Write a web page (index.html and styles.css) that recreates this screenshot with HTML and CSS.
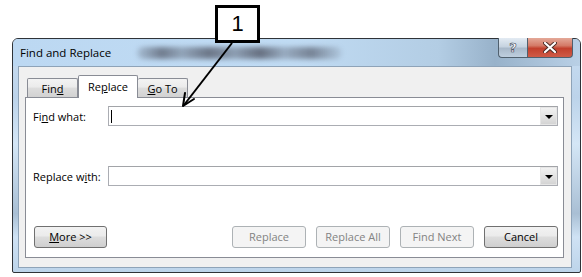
FILE: index.html
```html
<!DOCTYPE html>
<html lang="en">
  <head>
    <meta charset="UTF-8" />
    <title>Find and Replace</title>
    <link rel="stylesheet" href="styles.css">
  </head>
  <body>
    <div class="dialog">
      <div class="titlebar">
        <span class="title">Find and Replace</span>
        <span class="title-glow"></span>
        <div class="caption-btns">
          <span class="cap help">?</span>
          <span class="cap close">
            <svg width="14" height="11" viewBox="0 0 14 11">
              <path d="M2 1 L12 10 M12 1 L2 10" stroke="#4a2a24" stroke-width="4" stroke-linecap="round" />
              <path d="M2 1 L12 10 M12 1 L2 10" stroke="#fff" stroke-width="2.2" stroke-linecap="round" />
            </svg>
          </span>
        </div>
      </div>
      <div class="client">
        <div class="tabs">
          <span class="tab">Fin<u>d</u></span>
          <span class="tab active">Re<u>p</u>lace</span>
          <span class="tab"><u>G</u>o To</span>
        </div>
        <div class="panel">
          <div class="row">
            <label>Fi<u>n</u>d what:</label>
            <div class="combo">
              <span class="caret"></span>
              <span class="drop"></span>
            </div>
          </div>
          <div class="row">
            <label>Replace w<u>i</u>th:</label>
            <div class="combo">
              <span class="drop"></span>
            </div>
          </div>
          <div class="buttons">
            <button class="btn more"><u>M</u>ore &gt;&gt;</button>
            <button class="btn" disabled>Replace</button>
            <button class="btn" disabled>Replace All</button>
            <button class="btn" disabled>Find Next</button>
            <button class="btn">Cancel</button>
          </div>
        </div>
      </div>
    </div>

    <!-- annotation over the screenshot -->
    <div class="callout">1</div>
    <svg class="pointer" width="582" height="277" viewBox="0 0 582 277">
      <line x1="232" y1="43" x2="184" y2="105" stroke="#000" stroke-width="2" />
      <path d="M183 106 L185 93 M183 106 L194 99" stroke="#000" stroke-width="2" fill="none" stroke-linecap="round" />
    </svg>
  </body>
</html>
```

FILE: styles.css
```css
body {
  margin: 0;
  padding: 38px 0 0 12px;
  background: #fff;
  font-family: "Open Sans", "Noto Sans", sans-serif;
  font-size: 11px;
  color: #000;
  width: 582px;
  height: 277px;
  box-sizing: border-box;
  overflow: hidden;
}

.dialog {
  width: 569px;
  height: 235px;
  box-sizing: border-box;
  border: 1px solid #2f3338;
  border-radius: 6px 6px 2px 2px;
  background: linear-gradient(180deg, #c9def2 0%, #bcd3ea 25%, #d4e6f6 45%, #a9bfd4 75%, #cfe2f4 85%, #bdd4ea 100%);
  display: flex;
  flex-direction: column;
}

.titlebar {
  height: 27px;
  display: flex;
  align-items: flex-start;
  background: linear-gradient(90deg, #bcd8f2 0%, #c0dbf3 50%, #b3cde4 75%, #98b2ca 85%, #b9d0e6 100%);
  border-radius: 5px 5px 0 0;
}

.title {
  margin: 6px 0 0 7px;
  font-size: 11.5px;
  white-space: nowrap;
}

.title-glow {
  width: 205px;
  height: 12px;
  margin: 8px 0 0 26px;
  background: linear-gradient(90deg, rgba(80, 85, 100, 0.2) 0%, rgba(80, 85, 100, 0.7) 12%, rgba(80, 85, 100, 0.4) 22%, rgba(80, 85, 100, 0.75) 35%, rgba(80, 85, 100, 0.45) 48%, rgba(80, 85, 100, 0.8) 60%, rgba(80, 85, 100, 0.35) 72%, rgba(80, 85, 100, 0.65) 85%, rgba(80, 85, 100, 0.1) 100%);
  border-radius: 6px;
  filter: blur(2.5px);
}

.caption-btns {
  margin: -1px 7px 0 auto;
  display: flex;
  height: 20px;
}

.cap {
  display: flex;
  align-items: center;
  justify-content: center;
  box-sizing: border-box;
  border: 1px solid #50606e;
  border-top: none;
}

.help {
  width: 29px;
  border-radius: 0 0 0 4px;
  border-right: none;
  background: linear-gradient(180deg, #e3ebf3 0%, #c6d3e0 45%, #a9b9ca 55%, #bfcfdf 100%);
  color: #fff;
  font-family: "DejaVu Sans", sans-serif;
  font-weight: bold;
  font-size: 13px;
  -webkit-text-stroke: 0.6px #3a4656;
}

.close {
  width: 46px;
  border-radius: 0 0 4px 0;
  background: linear-gradient(180deg, #e4a999 0%, #d47a67 40%, #c2402d 55%, #cf5b47 100%);
}

.client {
  margin: 0 8px 0 5px;
  height: 202px;
  box-sizing: border-box;
  border: 1px solid #8ea3b8;
  background: #f0f0f0;
  padding: 8px 7px 9px 6px;
  display: flex;
  flex-direction: column;
}

.tabs {
  display: flex;
  align-items: flex-end;
  height: 22px;
  padding-left: 2px;
  position: relative;
  z-index: 1;
}

.tab {
  box-sizing: border-box;
  height: 19px;
  border: 1px solid #898c95;
  border-bottom: none;
  border-radius: 2px 2px 0 0;
  background: linear-gradient(180deg, #f3f3f3 0%, #ebebeb 45%, #dddddd 50%, #d2d2d2 100%);
  display: flex;
  justify-content: center;
  padding-top: 2px;
}

.tab:first-child {
  width: 51px;
}

.tab:last-child {
  width: 50px;
  border-left: none;
}

.tab.active {
  width: 60px;
  height: 23px;
  margin-bottom: -1px;
  background: #fff;
  padding-top: 3px;
}

.panel {
  height: 161px;
  box-sizing: border-box;
  border: 1px solid #898c95;
  background: #fff;
  padding: 8px 5px 9px 7px;
  display: flex;
  flex-direction: column;
  gap: 40px;
}

.row {
  display: flex;
  align-items: center;
  height: 20px;
}

.row label {
  width: 75px;
}

.combo {
  width: 450px;
  height: 20px;
  box-sizing: border-box;
  border: 1px solid #abadb3;
  border-top-color: #a2a4a8;
  display: flex;
  align-items: center;
  justify-content: space-between;
}

.caret {
  width: 1px;
  height: 13px;
  margin-left: 2px;
  background: #000;
}

.drop {
  width: 17px;
  height: 18px;
  margin-left: auto;
  box-sizing: border-box;
  border: 1px solid #e6e6e6;
  background: linear-gradient(180deg, #f2f2f2 0%, #e4e4e4 50%, #d4d4d4 100%);
  display: flex;
  align-items: center;
  justify-content: center;
}

.drop::after {
  content: "";
  border-left: 4px solid transparent;
  border-right: 4px solid transparent;
  border-top: 4px solid #000;
  margin-top: 1px;
}

.buttons {
  display: flex;
  gap: 10px;
  height: 22px;
}

.btn {
  width: 74px;
  height: 22px;
  box-sizing: border-box;
  border: 1px solid #707070;
  border-radius: 3px;
  background: linear-gradient(180deg, #f2f2f2 0%, #ebebeb 45%, #dddddd 50%, #cfcfcf 100%);
  font: inherit;
  color: #000;
  padding: 0 0 1px;
}

.btn.more {
  margin: 0 auto 0 1px;
  width: 73px;
}

.btn:disabled {
  border-color: #adb2b5;
  background: #f4f4f4;
  color: #838383;
}

.callout {
  position: absolute;
  left: 215px;
  top: 5px;
  width: 45px;
  height: 38px;
  box-sizing: border-box;
  border: 3px solid #000;
  background: #fff;
  font-family: "Liberation Sans", sans-serif;
  font-size: 22px;
  display: flex;
  align-items: flex-end;
  justify-content: center;
  padding-bottom: 3px;
  z-index: 3;
}

.pointer {
  position: absolute;
  left: 0;
  top: 0;
  z-index: 2;
}
```
